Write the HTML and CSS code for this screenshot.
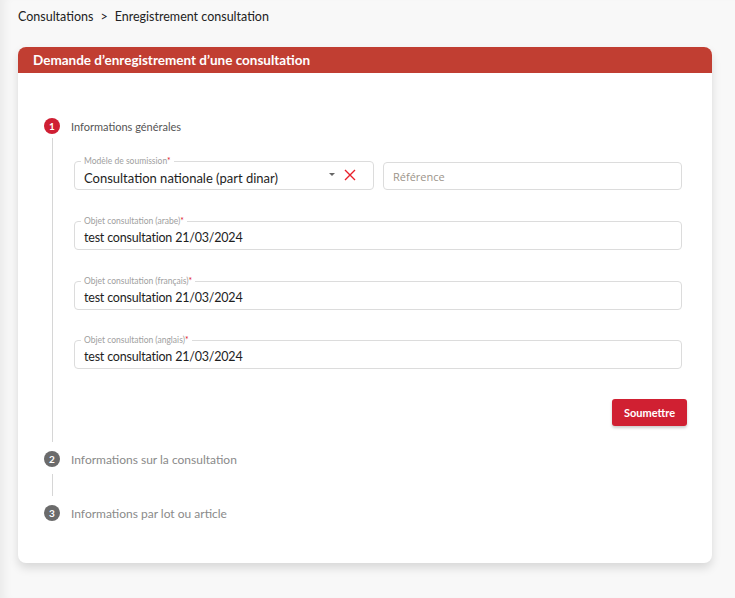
FILE: index.html
```html
<!DOCTYPE html>
<html lang="fr">
<head>
<meta charset="utf-8">
<title>Enregistrement consultation</title>
<link rel="stylesheet" href="styles.css">
</head>
<body>
<div class="page">
  <nav class="breadcrumb">
    <span>Consultations</span>
    <span class="sep">&gt;</span>
    <span>Enregistrement consultation</span>
  </nav>

  <section class="card">
    <header class="card-header">Demande d’enregistrement d’une consultation</header>
    <div class="card-body">
      <div class="step step-active">
        <div class="step-head">
          <span class="step-num">1</span>
          <span class="step-label">Informations générales</span>
        </div>
        <div class="step-content">
          <div class="row two">
            <div class="field">
              <span class="float-label">Modèle de soumission<span class="req">*</span></span>
              <span class="value">Consultation nationale (part dinar)</span>
              <span class="select-icons">
                <span class="caret"></span>
                <svg class="clear" width="12" height="12" viewBox="0 0 12 12"><path d="M1 1L11 11M11 1L1 11" stroke="#e8202a" stroke-width="1.4" fill="none"/></svg>
              </span>
            </div>
            <div class="field field-plain">
              <span class="placeholder">Référence</span>
            </div>
          </div>
          <div class="row">
            <div class="field">
              <span class="float-label">Objet consultation (arabe)<span class="req">*</span></span>
              <span class="value num">test consultation 21/03/2024</span>
            </div>
          </div>
          <div class="row">
            <div class="field">
              <span class="float-label">Objet consultation (français)<span class="req">*</span></span>
              <span class="value num">test consultation 21/03/2024</span>
            </div>
          </div>
          <div class="row">
            <div class="field">
              <span class="float-label">Objet consultation (anglais)<span class="req">*</span></span>
              <span class="value num">test consultation 21/03/2024</span>
            </div>
          </div>
          <div class="actions">
            <button class="btn">Soumettre</button>
          </div>
        </div>
      </div>

      <div class="step">
        <div class="step-head">
          <span class="step-num">2</span>
          <span class="step-label">Informations sur la consultation</span>
        </div>
        <div class="step-content short"></div>
      </div>

      <div class="step">
        <div class="step-head">
          <span class="step-num">3</span>
          <span class="step-label">Informations par lot ou article</span>
        </div>
      </div>
    </div>
  </section>
</div>
</body>
</html>
```

FILE: styles.css
```css
* { box-sizing: border-box; }
html, body { margin: 0; height: 100%; }
body {
  background: #f8f8f8;
  font-family: "Lato", "Liberation Sans", sans-serif;
  color: #222;
  box-shadow: inset 10px 0 10px -6px rgba(0,0,0,0.06);
}
.page {
  padding: 8px 23px 0 18px;
}
.breadcrumb {
  font-size: 12.5px;
  line-height: 17px;
  color: #222;
  display: flex;
  gap: 7px;
}
.card {
  margin-top: 22px;
  width: 694px;
  background: #fff;
  border-radius: 8px;
  box-shadow: 0 5px 10px rgba(0,0,0,0.13);
  overflow: hidden;
}
.card-header {
  background: #c13e32;
  color: #fff;
  font-weight: 700;
  font-size: 13.5px;
  height: 26px;
  line-height: 26px;
  padding-left: 15px;
}
.card-body {
  padding: 45px 30px 42px 26px;
}
.step-head {
  display: flex;
  align-items: center;
  gap: 11px;
  height: 16px;
}
.step-num {
  flex: none;
  width: 16px;
  height: 16px;
  border-radius: 50%;
  background: #6b6b6b;
  color: #fff;
  font-size: 10px;
  font-weight: 700;
  display: flex;
  align-items: center;
  justify-content: center;
}
.step-active .step-num { background: #cf1f33; }
.step-label {
  font-size: 12px;
  color: #8a8a8a;
}
.step-active .step-label { color: #555; font-size: 11px; }
.step-content {
  margin: 4px 0 9px 8px;
  border-left: 1px solid #d6d6d6;
  padding: 23px 0 16px 21px;
}
.step-content.short {
  padding: 0;
  margin: 7px 0 9px 8px;
  height: 22px;
}
.row {
  display: flex;
  gap: 9px;
  margin-bottom: 31px;
}
.row:nth-child(3) { margin-bottom: 30px; }
.row:nth-child(4) { margin-bottom: 30px; }
.row.two .field:first-child { width: 300px; flex: none; }
.field {
  position: relative;
  flex: 1;
  height: 29px;
  border: 1px solid #dcdcdc;
  border-radius: 4px;
  display: flex;
  align-items: center;
  padding: 4px 9px 0 9px;
}
.field-plain {
  padding-top: 0;
  margin-top: 1px;
  height: 28px;
}
.float-label {
  position: absolute;
  top: -6px;
  left: 6px;
  background: #fff;
  padding: 0 3px;
  font-size: 8.5px;
  line-height: 10px;
  color: #a0a0a0;
}
.req { color: #e0202a; }
.value {
  font-size: 13px;
  color: #1e1e1e;
  flex: 1;
}
.value.num { font-size: 12.5px; letter-spacing: -0.2px; }
.placeholder {
  font-family: "Open Sans", "Liberation Sans", sans-serif;
  font-size: 11px;
  color: #9c948a;
}
.select-icons {
  display: flex;
  align-items: center;
  gap: 9px;
  margin-right: 8px;
  margin-top: -5px;
}
.caret {
  width: 0;
  height: 0;
  border-left: 3px solid transparent;
  border-right: 3px solid transparent;
  border-top: 3px solid #666;
  margin-top: -1px;
}
.clear { display: block; }
.actions {
  display: flex;
  justify-content: flex-end;
  margin-right: -5px;
}
.btn {
  background: #d02032;
  color: #fff;
  border: none;
  border-radius: 3px;
  font-family: "Lato", "Liberation Sans", sans-serif;
  font-weight: 700;
  font-size: 11px;
  width: 75px;
  height: 27px;
  box-shadow: 0 2px 3px rgba(0,0,0,0.2);
}
```
